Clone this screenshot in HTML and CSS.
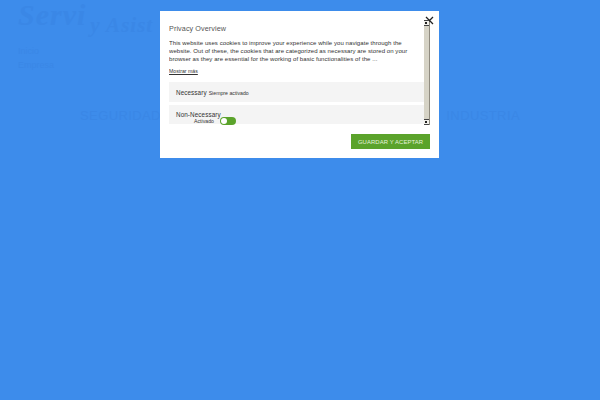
FILE: index.html
```html
<!DOCTYPE html>
<html lang="es">
<head>
<meta charset="utf-8">
<title>Privacy Overview</title>
<link rel="stylesheet" href="styles.css">
</head>
<body>
<div class="backdrop">
  <div class="logo"><span>Servi</span><span class="logo-small">y Asist</span></div>
  <div class="side">Inicio<br>Empresa</div>
  <div class="nav"><span>SEGURIDAD</span><span>INDUSTRIA</span></div>
</div>
<div class="modal">
  <button class="close" aria-label="Cerrar">
    <svg width="9" height="9" viewBox="0 0 9 9"><path d="M1 1l7 7M8 1l-7 7" stroke="#222" stroke-width="1.3" fill="none"/></svg>
  </button>
  <div class="body">
    <div class="content">
      <h2 class="title">Privacy Overview</h2>
      <p class="desc">This website uses cookies to improve your experience while you navigate through the website. Out of these, the cookies that are categorized as necessary are stored on your browser as they are essential for the working of basic functionalities of the ...</p>
      <a class="more">Mostrar más</a>
      <div class="row row-one"><span class="name">Necessary</span><span class="state">Siempre activado</span></div>
      <div class="row row-two">
        <span class="name">Non-Necessary</span>
        <div class="toggle-line"><span class="state">Activado</span><span class="toggle"><i class="knob"></i></span></div>
      </div>
    </div>
    <div class="scrollbar">
      <div class="arrow arrow-up"></div>
      <div class="track"></div>
      <div class="arrow arrow-down"></div>
    </div>
  </div>
  <div class="footer"><button class="save">GUARDAR Y ACEPTAR</button></div>
</div>
</body>
</html>
```
FILE: styles.css
```css
* { box-sizing: border-box; }
html, body { margin: 0; height: 100%; }
body {
  width: 600px;
  height: 400px;
  overflow: hidden;
  background: #3d8ceb;
  font-family: "Liberation Sans", Arial, sans-serif;
  position: relative;
}
.backdrop { padding: 0 0 0 18px; color: #3a87e6; height: 100%; }
.logo {
  font-family: "Liberation Serif", serif;
  font-style: italic;
  font-weight: bold;
  font-size: 30px;
  line-height: 30px;
  height: 42px;
  letter-spacing: 1px;
  white-space: nowrap;
}
.logo-small { font-size: 21px; margin-left: 4px; position: relative; top: 7px; }
.side { font-size: 9px; line-height: 14px; margin-top: 2px; }
.nav {
  display: flex;
  justify-content: space-between;
  width: 440px;
  margin: 36px 0 0 62px;
  font-size: 13px;
  letter-spacing: .4px;
}
.modal {
  position: absolute;
  left: 160px;
  top: 11px;
  width: 279px;
  height: 147px;
  background: #fff;
  padding: 9px 9px 0 9px;
  display: flex;
  flex-direction: column;
}
.close {
  position: absolute;
  right: 4px;
  top: 4px;
  width: 11px;
  height: 11px;
  padding: 1px;
  border: 0;
  background: none;
  display: flex;
}
.body { display: flex; height: 105px; }
.content { width: 255px; height: 105px; overflow: hidden; }
.title {
  margin: 4px 0 0;
  font-size: 7.2px;
  line-height: 10px;
  font-weight: normal;
  color: #555;
  letter-spacing: .1px;
}
.desc {
  margin: 5px 0 0;
  width: 243px;
  font-size: 6.05px;
  line-height: 8.2px;
  color: #333;
  letter-spacing: .05px;
}
.more {
  display: block;
  margin-top: 3px;
  font-size: 5.2px;
  line-height: 8px;
  color: #333;
  text-decoration: underline;
}
.row { background: #f4f4f4; padding: 0 7px; color: #333; }
.row-one { margin-top: 7px; height: 20px; display: flex; align-items: center; gap: 2px; padding-top: 2px; }
.row-two { margin-top: 3px; height: 19px; }
.name { font-size: 6.3px; line-height: 7px; display: block; letter-spacing: .1px; }
.row-two .name { padding-top: 6px; }
.state { font-size: 5.2px; }
.toggle-line { display: flex; align-items: center; margin: -1px 0 0 18px; gap: 6px; }
.toggle-line .state { line-height: 6px; }
.toggle {
  width: 16px;
  height: 8px;
  border-radius: 4px;
  background: #5ba32b;
  display: flex;
  padding: 1px;
}
.knob { width: 6px; height: 6px; border-radius: 50%; background: #fff; }
.scrollbar {
  width: 6px;
  height: 105px;
  display: flex;
  flex-direction: column;
  border-right: 1px solid #8f8b80;
  background: #d6d3c6;
}
.track { flex: 1; }
.arrow { height: 6px; background: #f2f1ec; border-top: 1px solid #444; border-bottom: 1px solid #444; position: relative; }
.arrow::after { content: ""; position: absolute; left: 1px; top: 1px; width: 2px; height: 2px; background: #222; }
.footer { display: flex; justify-content: flex-end; margin-top: 9px; }
.save {
  width: 79px;
  height: 15px;
  border: 0;
  padding: 0;
  background: #5ba32b;
  color: #e6f2dc;
  font-family: inherit;
  font-size: 5.9px;
  letter-spacing: .1px;
}
```
